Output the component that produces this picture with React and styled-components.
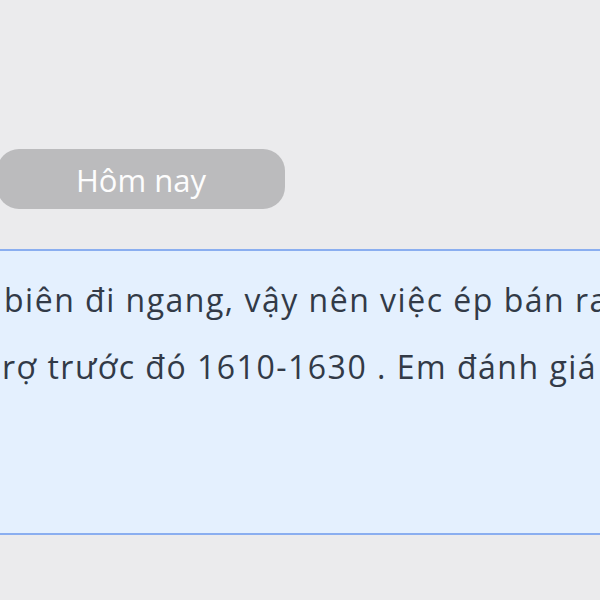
import React from "react";
import styled, { createGlobalStyle } from "styled-components";

const GlobalStyle = createGlobalStyle`
  html, body {
    margin: 0;
    padding: 0;
    background: #ebebed;
  }
  body {
    font-family: "Open Sans", "Noto Sans", sans-serif;
    overflow: hidden;
  }
`;

const Page = styled.div`
  width: 600px;
  height: 600px;
  display: flex;
  flex-direction: column;
  align-items: flex-start;
  padding-top: 149px;
  box-sizing: border-box;
  overflow: hidden;
`;

const DayPill = styled.div`
  margin-left: -3px;
  width: 288px;
  height: 60px;
  border-radius: 22px;
  background: #bbbbbd;
  color: #fdfdfd;
  font-size: 31px;
  display: flex;
  align-items: center;
  justify-content: center;
  padding-top: 1px;
  box-sizing: border-box;
`;

const Bubble = styled.div`
  margin-top: 40px;
  width: 600px;
  height: 286px;
  box-sizing: border-box;
  background: #e4f0fe;
  border-top: 2px solid #8aaef0;
  border-bottom: 2px solid #8aaef0;
  padding-top: 15px;
  overflow: hidden;
`;

const Line = styled.div`
  white-space: nowrap;
  font-size: 32px;
  letter-spacing: 1.5px;
  line-height: 67px;
  color: #323a47;
  padding-left: ${(p) => p.$indent}px;
`;

export default function App() {
  return (
    <>
      <GlobalStyle />
      <Page>
        <DayPill>Hôm nay</DayPill>
        <Bubble>
          <Line $indent={4}>biên đi ngang, vậy nên việc ép bán ra</Line>
          <Line $indent={2}>rợ trước đó 1610-1630 . Em đánh giá</Line>
        </Bubble>
      </Page>
    </>
  );
}
